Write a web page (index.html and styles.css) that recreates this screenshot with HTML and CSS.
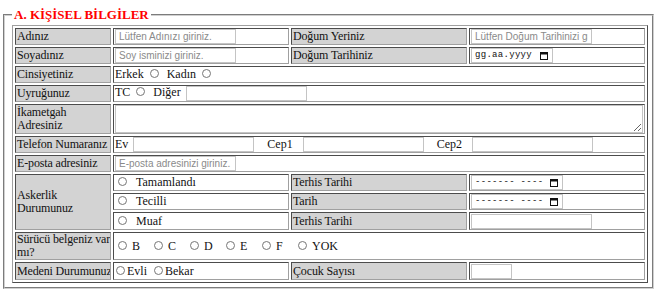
FILE: index.html
```html
<!DOCTYPE html>
<html lang="tr">
<head>
<meta charset="UTF-8">
<meta name="viewport" content="width=device-width, initial-scale=1.0">
<title>Başvuru Formu</title>
<link rel="stylesheet" href="styles.css">
</head>
<body>
<form class="basvuru">
  <fieldset>
    <legend>A. KİŞİSEL BİLGİLER</legend>
    <table class="bilgi">
      <colgroup>
        <col class="c1"><col class="c2"><col class="c3"><col class="c4">
      </colgroup>
      <tr>
        <td class="label">Adınız</td>
        <td><input type="text" class="txt" placeholder="Lütfen Adınızı giriniz."></td>
        <td class="label">Doğum Yeriniz</td>
        <td><input type="text" class="txt" placeholder="Lütfen Doğum Tarihinizi giriniz."></td>
      </tr>
      <tr>
        <td class="label">Soyadınız</td>
        <td><input type="text" class="txt" placeholder="Soy isminizi giriniz."></td>
        <td class="label">Doğum Tarihiniz</td>
        <td>
          <div class="date-box date-short"><span class="date-text">gg.aa.yyyy</span>
            <svg class="cal" width="8" height="8" viewBox="0 0 8 8"><rect x="0.5" y="0.5" width="7" height="7" fill="none" stroke="#111"/><rect x="0" y="0" width="8" height="2.5" fill="#111"/></svg>
          </div>
        </td>
      </tr>
      <tr>
        <td class="label">Cinsiyetiniz</td>
        <td colspan="3">Erkek <input type="radio" name="cins" class="rd"> &nbsp;Kadın <input type="radio" name="cins" class="rd"></td>
      </tr>
      <tr>
        <td class="label">Uyruğunuz</td>
        <td colspan="3">TC <input type="radio" name="uyruk" class="rd"> &nbsp;Diğer <input type="text" class="txt diger"></td>
      </tr>
      <tr class="tall">
        <td class="label">İkametgah<br>Adresiniz</td>
        <td colspan="3"><textarea class="adres"></textarea></td>
      </tr>
      <tr>
        <td class="label">Telefon Numaranız</td>
        <td colspan="3">
          <div class="tel">
            <span>Ev</span><input type="text" class="txt">
            <span class="cep">Cep1</span><input type="text" class="txt">
            <span class="cep">Cep2</span><input type="text" class="txt">
          </div>
        </td>
      </tr>
      <tr>
        <td class="label">E-posta adresiniz</td>
        <td colspan="3"><input type="text" class="txt" placeholder="E-posta adresinizi giriniz."></td>
      </tr>
      <tr>
        <td class="label" rowspan="3">Askerlik<br>Durumunuz</td>
        <td><input type="radio" name="asker" class="rd rd-ask">Tamamlandı</td>
        <td class="label">Terhis Tarihi</td>
        <td>
          <div class="date-box date-week"><span class="date-text">------- ----</span>
            <svg class="cal" width="8" height="8" viewBox="0 0 8 8"><rect x="0.5" y="0.5" width="7" height="7" fill="none" stroke="#111"/><rect x="0" y="0" width="8" height="2.5" fill="#111"/></svg>
          </div>
        </td>
      </tr>
      <tr>
        <td><input type="radio" name="asker" class="rd rd-ask">Tecilli</td>
        <td class="label">Tarih</td>
        <td>
          <div class="date-box date-week"><span class="date-text">------- ----</span>
            <svg class="cal" width="8" height="8" viewBox="0 0 8 8"><rect x="0.5" y="0.5" width="7" height="7" fill="none" stroke="#111"/><rect x="0" y="0" width="8" height="2.5" fill="#111"/></svg>
          </div>
        </td>
      </tr>
      <tr class="r18">
        <td><input type="radio" name="asker" class="rd rd-ask">Muaf</td>
        <td class="label">Terhis Tarihi</td>
        <td><input type="text" class="txt"></td>
      </tr>
      <tr class="mid">
        <td class="label">Sürücü belgeniz var<br>mı?</td>
        <td colspan="3">
          <div class="ehliyet">
            <label><input type="radio" name="ehl" class="rd">B</label>
            <label><input type="radio" name="ehl" class="rd">C</label>
            <label><input type="radio" name="ehl" class="rd">D</label>
            <label><input type="radio" name="ehl" class="rd">E</label>
            <label><input type="radio" name="ehl" class="rd">F</label>
            <label><input type="radio" name="ehl" class="rd">YOK</label>
          </div>
        </td>
      </tr>
      <tr class="r18">
        <td class="label">Medeni Durumunuz</td>
        <td><input type="radio" name="medeni" class="rd rd-m">Evli &nbsp;<input type="radio" name="medeni" class="rd rd-m">Bekar</td>
        <td class="label">Çocuk Sayısı</td>
        <td><input type="text" class="txt cocuk"></td>
      </tr>
    </table>
  </fieldset>
</form>
</body>
</html>
```

FILE: styles.css
```css
body {
  margin: 0;
  font-family: "Liberation Serif", "Times New Roman", serif;
  font-size: 12px;
  color: #111;
}
.basvuru {
  margin: 0;
}
fieldset {
  margin: 6px 4px 0 3px;
  padding: 2px 4px 4px 7px;
  border: 2px groove #d0d0d0;
}
legend {
  padding: 0 2px;
  color: #f00;
  font-weight: bold;
  font-size: 13px;
  line-height: 17px;
}
.bilgi {
  table-layout: fixed;
  width: 636px;
  border: 1px outset #a0a0a0;
  border-spacing: 2px;
}
.c1 { width: 96px; }
.c2 { width: 176px; }
.c3 { width: 176px; }
.c4 { width: 176px; }
.bilgi td {
  box-sizing: border-box;
  height: 17px;
  padding: 0 1px;
  border: 1px inset #a0a0a0;
  line-height: 13px;
  white-space: nowrap;
}
.bilgi td.label {
  background-color: #d3d3d3;
  letter-spacing: -0.15px;
  overflow: hidden;
}
.bilgi tr.r18 td {
  height: 18px;
}
.bilgi tr.tall td {
  height: 30px;
}
.bilgi tr.mid td {
  height: 28px;
}
.txt {
  box-sizing: border-box;
  width: 121px;
  height: 15px;
  margin: 0;
  padding: 0 3px;
  border: 1px solid #c4c4c4;
  font-family: "Liberation Sans", Arial, sans-serif;
  font-size: 10px;
  vertical-align: middle;
}
.txt::placeholder {
  color: #8a8a8a;
}
.diger {
  margin-left: 2px;
}
.cocuk {
  width: 41px;
}
.rd {
  width: 9px;
  height: 9px;
  margin: 0 2px 0 3px;
  vertical-align: 0;
}
.rd-ask {
  margin: 0 9px 0 3px;
}
.rd-m {
  margin: 0 2px 0 1px;
}
.adres {
  display: block;
  box-sizing: border-box;
  width: 100%;
  height: 28px;
  margin: 0;
  border: 1px solid #c4c4c4;
  resize: vertical;
}
.tel {
  display: flex;
  align-items: center;
}
.tel .txt {
  margin-left: 5px;
}
.tel .cep {
  margin-left: 13px;
  margin-right: 5px;
}
.ehliyet {
  display: flex;
}
.ehliyet label {
  width: 36px;
}
.ehliyet .rd {
  margin: 0 5px 0 3px;
}
.date-box {
  box-sizing: border-box;
  display: flex;
  align-items: center;
  justify-content: space-between;
  height: 15px;
  padding: 0 4px 0 3px;
  border: 1px solid #c4c4c4;
  background: #fff;
}
.date-short {
  width: 82px;
}
.date-week {
  width: 92px;
}
.date-text {
  font-family: "Liberation Mono", "Courier New", monospace;
  font-size: 9px;
  letter-spacing: 0.3px;
}
.cal {
  display: block;
}
```
